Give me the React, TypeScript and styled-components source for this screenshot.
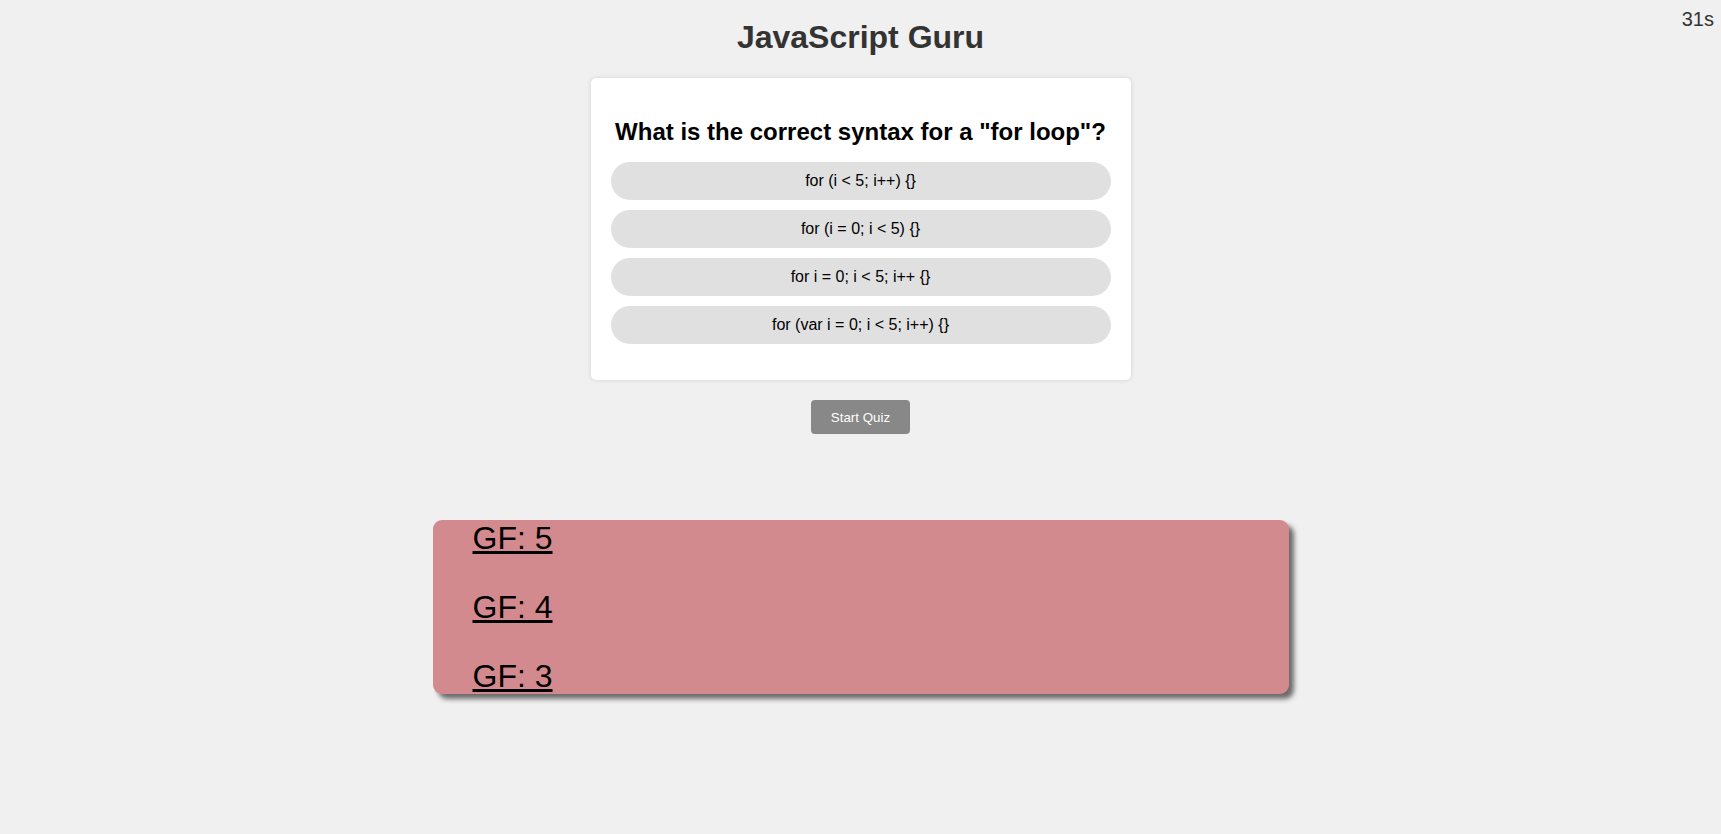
import React from "react";
import styled, { createGlobalStyle } from "styled-components";

const GlobalStyle = createGlobalStyle`
  html, body {
    margin: 0;
    padding: 0;
    background: #f0f0f0;
    font-family: "Liberation Sans", Arial, sans-serif;
  }
`;

const Page = styled.div`
  position: relative;
  min-height: 834px;
  display: flex;
  flex-direction: column;
  align-items: center;
`;

const Timer = styled.div`
  position: absolute;
  top: 8px;
  right: 7px;
  font-size: 20px;
  color: #333;
`;

const Title = styled.h1`
  margin: 19px 0 22px;
  font-size: 32px;
  font-weight: bold;
  color: #333;
  text-align: center;
`;

const Card = styled.div`
  box-sizing: border-box;
  width: 540px;
  padding: 20px 20px 36px;
  background: #fff;
  border-radius: 5px;
  box-shadow: 0 0 5px rgba(0, 0, 0, 0.12);
  display: flex;
  flex-direction: column;
  align-items: stretch;
`;

const Question = styled.h2`
  margin: 20px 0 16px;
  font-size: 24px;
  font-weight: bold;
  color: #000;
  text-align: center;
  white-space: nowrap;
`;

const Options = styled.div`
  display: flex;
  flex-direction: column;
  gap: 10px;
`;

const Option = styled.button`
  height: 38px;
  border: none;
  border-radius: 19px;
  background: #e0e0e0;
  color: #000;
  font-family: "Liberation Sans", Arial, sans-serif;
  font-size: 16px;
  line-height: 18px;
  padding: 0 10px;
  text-align: center;
  cursor: pointer;
`;

const StartButton = styled.button`
  margin-top: 20px;
  height: 34px;
  padding: 0 20px;
  border: none;
  border-radius: 4px;
  background: #888;
  color: #fff;
  font-family: "Liberation Sans", Arial, sans-serif;
  font-size: 13.33px;
  cursor: pointer;
`;

const Scores = styled.ul`
  box-sizing: border-box;
  width: 856px;
  margin: 86px 0 0;
  padding: 0 0 0 40px;
  list-style: none;
  background: #d38a8e;
  border-radius: 9px;
  box-shadow: 5px 5px 5px #6b6b6b;
  display: flex;
  flex-direction: column;
  gap: 32px;
`;

const ScoreItem = styled.li`
  font-size: 32px;
  line-height: 36.8px;
`;

const ScoreLink = styled.a`
  color: #000;
  text-decoration: underline;
`;

const options = [
  "for (i < 5; i++) {}",
  "for (i = 0; i < 5) {}",
  "for i = 0; i < 5; i++ {}",
  "for (var i = 0; i < 5; i++) {}",
];

const scores = ["GF: 5", "GF: 4", "GF: 3"];

export default function App() {
  return (
    <>
      <GlobalStyle />
      <Page>
        <Timer>31s</Timer>
        <Title>JavaScript Guru</Title>
        <Card>
          <Question>What is the correct syntax for a "for loop"?</Question>
          <Options>
            {options.map((o) => (
              <Option key={o}>{o}</Option>
            ))}
          </Options>
        </Card>
        <StartButton>Start Quiz</StartButton>
        <Scores>
          {scores.map((s) => (
            <ScoreItem key={s}>
              <ScoreLink href="#">{s}</ScoreLink>
            </ScoreItem>
          ))}
        </Scores>
      </Page>
    </>
  );
}
